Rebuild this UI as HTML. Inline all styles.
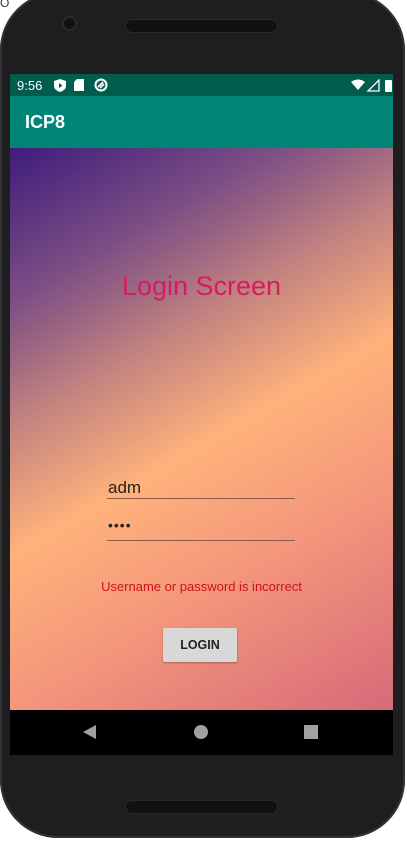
<!DOCTYPE html>
<html><head><style>
body{margin:0;width:407px;height:841px;background:#fff;position:relative;overflow:hidden;font-family:"Liberation Sans",sans-serif}
.phone{position:absolute;left:0;top:-8px;width:405px;height:846px;background:#1e1e20;border-radius:58px;box-shadow:inset 0 0 0 2px #333}
.spk{position:absolute;left:125px;width:153px;height:14px;border-radius:7px;background:#111;box-shadow:inset 0 0 0 1px #2a2a2a}
.screen{position:absolute;left:10px;top:74px;width:383px;height:681px;background:#000}
.status{position:absolute;left:0;top:0;width:383px;height:22px;background:#015c4e;color:#fff;font-size:13px}
.bar{position:absolute;left:0;top:22px;width:383px;height:52px;background:#008577;color:#fff;font-weight:bold;font-size:18px}
.content{position:absolute;left:0;top:74px;width:383px;height:562px;background:linear-gradient(150deg,#3e1c7c 0%,#7d4f84 20%,#c4847f 36%,#ffb27b 52%,#f3957b 72%,#d76a7a 100%)}
.line{position:absolute;left:97px;width:188px;height:1px;background:#8a5a50}
</style></head><body>
<div style="position:absolute;left:0;top:-4px;font-size:12px;color:#333">O</div>
<div class="phone">
<div class="spk" style="top:27px"></div>
<div style="position:absolute;left:64px;top:26px;width:11px;height:11px;border-radius:50%;background:#111;box-shadow:0 0 0 2px #2a2a2a"></div>
<div class="spk" style="top:808px"></div>
</div>
<div class="screen">
<div class="status">
<span style="position:absolute;left:7px;top:4px">9:56</span>
<svg style="position:absolute;left:44px;top:5px" width="12" height="13"><path d="M6 0L12 2V7Q12 11 6 13Q0 11 0 7V2Z" fill="#fff"/><path d="M5 4L8.5 6.5L5 9Z" fill="#015c4e"/></svg>
<svg style="position:absolute;left:64px;top:5px" width="10" height="12"><path d="M3 0H10V12H0V3Z" fill="#fff"/></svg>
<svg style="position:absolute;left:84px;top:4px" width="14" height="14"><circle cx="7" cy="7" r="5.5" stroke="#fff" stroke-width="2" fill="none"/><path d="M4 9L9 4M6 10L10 6" stroke="#fff" stroke-width="1.6"/></svg>
<svg style="position:absolute;left:341px;top:5px" width="42" height="13"><path d="M0 3Q7 -2 14 3L7 11Z" fill="#fff"/><path d="M28 1V12H17Z" stroke="#fff" stroke-width="1.3" fill="none"/><rect x="34" y="1" width="7" height="12" rx="1" fill="#fff"/></svg>
</div>
<div class="bar"><span style="position:absolute;left:15px;top:16px">ICP8</span></div>
<div class="content">
<div style="position:absolute;left:0;width:383px;top:123px;text-align:center;color:#d81b60;font-size:27px">Login Screen</div>
<div style="position:absolute;left:98px;top:330px;font-size:17px;color:#222">adm</div>
<div class="line" style="top:350px"></div>
<div style="position:absolute;left:98px;top:369px;font-size:14px;color:#222;letter-spacing:1px">••••</div>
<div class="line" style="top:392px"></div>
<div style="position:absolute;left:0;width:383px;top:431px;text-align:center;color:#d0121b;font-size:13px">Username or password is incorrect</div>
<div style="position:absolute;left:153px;width:74px;height:34px;top:480px;background:#d8d8d8;border-radius:2px;box-shadow:0 1px 2px rgba(0,0,0,.3);text-align:center;line-height:34px;font-size:12.5px;color:#222;font-weight:bold;font-weight:600">LOGIN</div>
</div>
<svg style="position:absolute;left:0;top:636px" width="383" height="45"><path d="M73 22L86 15V29Z" fill="#a0a0a0"/><circle cx="191" cy="22" r="7" fill="#a0a0a0"/><rect x="294" y="15" width="14" height="14" fill="#a0a0a0"/></svg>
</div>
</body></html>
